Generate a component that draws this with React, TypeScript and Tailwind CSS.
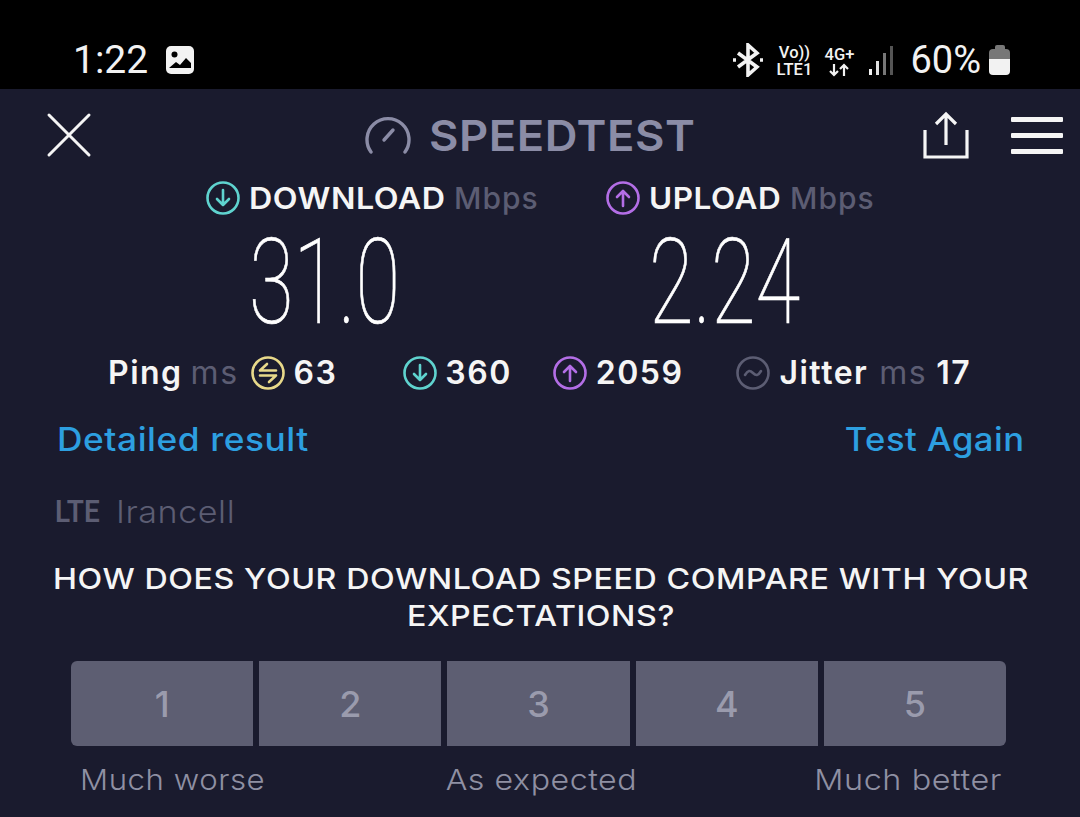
import React from "react";

const CircleIcon = ({ color, children }: { color: string; children: React.ReactNode }) => (
  <svg width="34" height="34" viewBox="0 0 34 34" fill="none" stroke={color} strokeWidth="2.6" strokeLinecap="round" strokeLinejoin="round">
    <circle cx="17" cy="17" r="15.5" />
    {children}
  </svg>
);

const DownIcon = () => (
  <CircleIcon color="#5fd3cf">
    <path d="M17 9v15M11 18l6 6 6-6" />
  </CircleIcon>
);

const UpIcon = () => (
  <CircleIcon color="#b36ee6">
    <path d="M17 25V10M11 16l6-6 6 6" />
  </CircleIcon>
);

const StatusBar = () => (
  <div className="h-[89px] bg-black flex items-center justify-between pl-[73px] pr-[70px] pt-[30px] text-[#f2f2f2] font-['Roboto',sans-serif]">
    <div className="flex items-center gap-[17px]">
      <span className="mt-[2px] text-[39px] leading-none">1:22</span>
      <svg width="30" height="30" viewBox="0 0 30 30">
        <rect x="1" y="1" width="28" height="28" rx="5" fill="#f2f2f2" />
        <circle cx="9.5" cy="9.5" r="3" fill="#000" />
        <path d="M4 23l7-6 4 3 6-7 5 5v5H4z" fill="#000" />
      </svg>
    </div>
    <div className="flex items-center">
      <svg width="30" height="34" viewBox="0 0 30 34" fill="none" stroke="#f2f2f2" strokeWidth="3.6">
        <path d="M5 10l19 14-9 8V2l9 8L5 24" />
        <path d="M0 17h3M27 17h3" />
      </svg>
      <div className="ml-[10px] mt-[3px] w-[42px] flex flex-col items-center text-[16.5px] leading-[17px] font-medium">
        <span>Vo))</span>
        <span>LTE1</span>
      </div>
      <div className="ml-[7px] mt-[3px] w-[34px] flex flex-col items-center text-[16.5px] leading-[17px] font-medium">
        <span>4G+</span>
        <svg width="22" height="14" viewBox="0 0 22 14" fill="none" stroke="#f2f2f2" strokeWidth="2.2">
          <path d="M6 1v11M2 8l4 4 4-4M16 13V2M12 6l4-4 4 4" />
        </svg>
      </div>
      <div className="ml-[13px] flex items-end gap-[4px] h-[30px]">
        <div className="w-[3px] h-[6px] bg-[#f2f2f2]" />
        <div className="w-[3px] h-[14px] bg-[#e0e0e0]" />
        <div className="w-[3px] h-[22px] bg-[#777777]" />
        <div className="w-[3px] h-[29px] bg-[#555555]" />
      </div>
      <span className="ml-[17px] text-[38px] leading-none">60%</span>
      <div className="ml-[8px] flex flex-col items-center">
        <div className="w-[10px] h-[4px] rounded-t-[2px] bg-[#777777]" />
        <div className="w-[21px] h-[26px] rounded-[4px] bg-[linear-gradient(#777777_0%,#777777_38%,#f2f2f2_38%)]" />
      </div>
    </div>
  </div>
);

const Header = () => (
  <div className="h-[92px] flex items-center justify-between pl-[46px] pr-[17px]">
    <svg width="46" height="46" viewBox="0 0 46 46" stroke="#f5f5f5" strokeWidth="3" strokeLinecap="round">
      <path d="M3 3l40 40M43 3L3 43" />
    </svg>
    <div className="ml-[33px] flex items-center gap-[18px] text-[#8b8ca6]">
      <svg width="46" height="38" viewBox="0 0 46 38" fill="none" stroke="currentColor" strokeWidth="3.4" strokeLinecap="round">
        <path d="M6 36a21 21 0 1 1 34 0" />
        <path d="M19 24l9-10" />
      </svg>
      <span className="text-[43px] leading-none font-semibold tracking-[0.5px] scale-x-[1.054] origin-left">SPEEDTEST</span>
    </div>
    <div className="flex items-center gap-[41px]">
      <svg width="48" height="48" viewBox="0 0 48 48" fill="none" stroke="#f5f5f5" strokeWidth="3.2">
        <path d="M3 19v27h42V19" />
        <path d="M24 34V4M14 13l10-10 10 10" />
      </svg>
      <div className="w-[52px] flex flex-col gap-[11px]">
        <div className="h-[5px] rounded-[1px] bg-[#f5f5f5]" />
        <div className="h-[5px] rounded-[1px] bg-[#f5f5f5]" />
        <div className="h-[5px] rounded-[1px] bg-[#f5f5f5]" />
      </div>
    </div>
  </div>
);

const Speed = ({ icon, label, value, width, labelClass }: { icon: React.ReactNode; label: string; value: string; width: string; labelClass: string }) => (
  <div className={`flex flex-col items-start ${width}`}>
    <div className="flex items-center gap-[9px] text-[30px] leading-[34px] whitespace-nowrap">
      {icon}
      <span className={`font-semibold text-[#f5f5f5] tracking-[0.5px] origin-left ${labelClass}`}>{label}</span>
      <span className="text-[#5c5d73] font-medium tracking-[1px]">Mbps</span>
    </div>
    <div className="mt-[20px] ml-[43px] text-[118px] leading-[96px] font-['Roboto',sans-serif] font-thin text-white [-webkit-text-stroke:0.7px_white] whitespace-nowrap scale-x-[0.69] origin-left">
      {value}
    </div>
  </div>
);

export default function App() {
  return (
    <div className="w-[1080px] h-[817px] overflow-hidden bg-[#1a1b2e] font-['Inter',sans-serif]">
      <StatusBar />
      <Header />
      <div className="flex pl-[206px] gap-[68px]">
        <Speed icon={<DownIcon />} label="DOWNLOAD" value="31.0" width="w-[332px]" labelClass="w-[196px] scale-x-[1.074]" />
        <Speed icon={<UpIcon />} label="UPLOAD" value="2.24" width="w-[268px]" labelClass="w-[132px] scale-x-[1.05]" />
      </div>
      <div className="mt-[20px] h-[44px] flex items-center pl-[108px] text-[32px] tracking-[1.5px] font-semibold text-[#f5f5f5] whitespace-nowrap">
        <span>Ping</span>
        <span className="ml-[8px] text-[#5c5d73] font-normal">ms</span>
        <span className="ml-[12px]">
          <CircleIcon color="#e8d98a">
            <path d="M9 14.5h16M9 14.5l7-6.5M25 19.5H9M25 19.5l-7 6.5" />
          </CircleIcon>
        </span>
        <span className="ml-[9px]">63</span>
        <span className="ml-[66px]"><DownIcon /></span>
        <span className="ml-[8px]">360</span>
        <span className="ml-[41px]"><UpIcon /></span>
        <span className="ml-[9px]">2059</span>
        <span className="ml-[53px]">
          <CircleIcon color="#5c5d73">
            <path d="M9 19c3-5 5-5 8-2s5 3 8-2" />
          </CircleIcon>
        </span>
        <span className="ml-[9px]">Jitter</span>
        <span className="ml-[11px] text-[#5c5d73] font-normal">ms</span>
        <span className="ml-[9px]">17</span>
      </div>
      <div className="mt-[23px] flex justify-between pl-[57px] pr-[55px] text-[32px] leading-[44px] font-medium tracking-[0.5px] text-[#2d9fe0]">
        <span className="scale-x-[1.103] origin-left">Detailed result</span>
        <span className="scale-x-[1.08] origin-right">Test Again</span>
      </div>
      <div className="mt-[30px] pl-[55px] flex items-center gap-[13px] text-[#5c5d73] text-[31px] leading-[40px]">
        <span className="font-semibold font-['Roboto',sans-serif] scale-x-[0.9] origin-left -mr-[2px]">LTE</span>
        <span className="font-light tracking-[0.5px] scale-x-[1.1] origin-left">Irancell</span>
      </div>
      <div className="mt-[28px] text-center text-[#f5f5f5] text-[28.5px] leading-[37px] font-medium tracking-[0.5px]">
        <p className="scale-x-[1.13] translate-x-[1px]">HOW DOES YOUR DOWNLOAD SPEED COMPARE WITH YOUR</p>
        <p className="scale-x-[1.13] translate-x-[1px]">EXPECTATIONS?</p>
      </div>
      <div className="mt-[27px] ml-[71px] mr-[74px] flex gap-[6px] text-[36px] font-medium text-[#9a9bad]">
        {[1, 2, 3, 4, 5].map((n) => (
          <div
            key={n}
            className="flex-1 h-[85px] flex items-center justify-center bg-[#5d5e72] first:rounded-l-[6px] last:rounded-r-[6px]"
          >
            {n}
          </div>
        ))}
      </div>
      <div className="mt-[16px] pl-[80px] pr-[78px] flex justify-between text-[29px] leading-[36px] font-light tracking-[0.5px] text-[#8f90a3]">
        <span className="scale-x-[1.076] origin-left">Much worse</span>
        <span className="scale-x-[1.108] -translate-x-[2px]">As expected</span>
        <span className="scale-x-[1.117] origin-right">Much better</span>
      </div>
    </div>
  );
}
